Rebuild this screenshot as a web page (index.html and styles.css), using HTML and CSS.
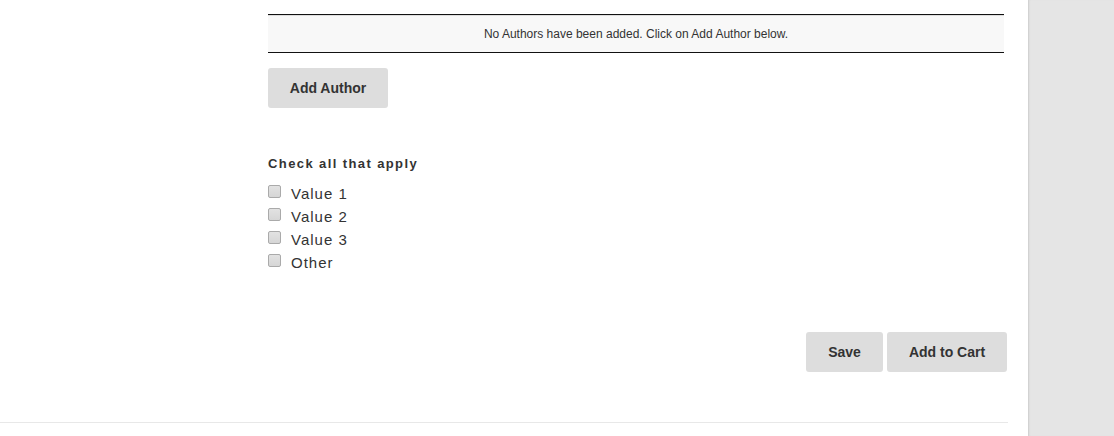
FILE: index.html
```html
<!DOCTYPE html>
<html lang="en">
<head>
    <meta charset="UTF-8">
    <title>Submission Details</title>
    <link rel="stylesheet" href="styles.css">
</head>
<body>
    <div class="page">
        <div class="main">
            <div class="content">
                <div class="authors-table">No Authors have been added. Click on Add Author below.</div>
                <button class="btn btn-author">Add Author</button>

                <div class="options">
                    <h4 class="options-title">Check all that apply</h4>
                    <label class="option"><input type="checkbox"> Value 1</label>
                    <label class="option"><input type="checkbox"> Value 2</label>
                    <label class="option"><input type="checkbox"> Value 3</label>
                    <label class="option"><input type="checkbox"> Other</label>
                </div>
            </div>

            <div class="actions">
                <button class="btn btn-save">Save</button>
                <button class="btn btn-cart">Add to Cart</button>
            </div>

            <div class="footer-line"></div>
        </div>
        <div class="sidebar"></div>
    </div>
</body>
</html>
```

FILE: styles.css
```css
body {
    font-family: 'Liberation Sans', Arial, sans-serif;
    background-color: #fff;
    color: #333;
    margin: 0;
    padding: 0;
}

.page {
    display: flex;
    height: 436px;
    overflow: hidden;
}

.main {
    width: 1008px;
    margin-right: 20px;
    padding-top: 14px;
}

.content {
    margin-left: 268px;
    width: 736px;
}

.authors-table {
    border-top: 1px solid #111;
    border-bottom: 1px solid #111;
    box-shadow: inset 0 1px 0 #ddd;
    background-color: #f8f8f8;
    height: 37px;
    line-height: 38px;
    text-align: center;
    font-size: 12px;
    color: #333;
}

.btn {
    background-color: #ddd;
    color: #333;
    border: none;
    border-radius: 3px;
    font-family: 'Liberation Sans', Arial, sans-serif;
    font-size: 14px;
    font-weight: bold;
    height: 40px;
    padding: 0;
    cursor: pointer;
}

.btn-author {
    width: 120px;
    margin-top: 15px;
}

.options {
    margin-top: 47px;
}

.options-title {
    font-size: 13px;
    font-weight: bold;
    letter-spacing: 1.4px;
    margin: 0 0 9px;
    line-height: 18px;
}

.option {
    display: flex;
    align-items: center;
    height: 23px;
    font-size: 15px;
    letter-spacing: 1px;
    color: #333;
}

.option input {
    -webkit-appearance: none;
    appearance: none;
    width: 13px;
    height: 13px;
    margin: 0 10px 4px 0;
    border: 1px solid #aaa;
    border-radius: 2px;
    background: linear-gradient(#e2e2e2, #d6d6d6);
}

.actions {
    display: flex;
    justify-content: flex-end;
    gap: 4px;
    margin-top: 58px;
    padding-right: 1px;
}

.btn-save {
    width: 77px;
}

.btn-cart {
    width: 120px;
}

.footer-line {
    margin-top: 50px;
    border-top: 1px solid #e8e8e8;
}

.sidebar {
    flex: 1;
    background-color: #e5e5e5;
    box-shadow: inset 2px 0 2px -1px #ccc;
}
```
